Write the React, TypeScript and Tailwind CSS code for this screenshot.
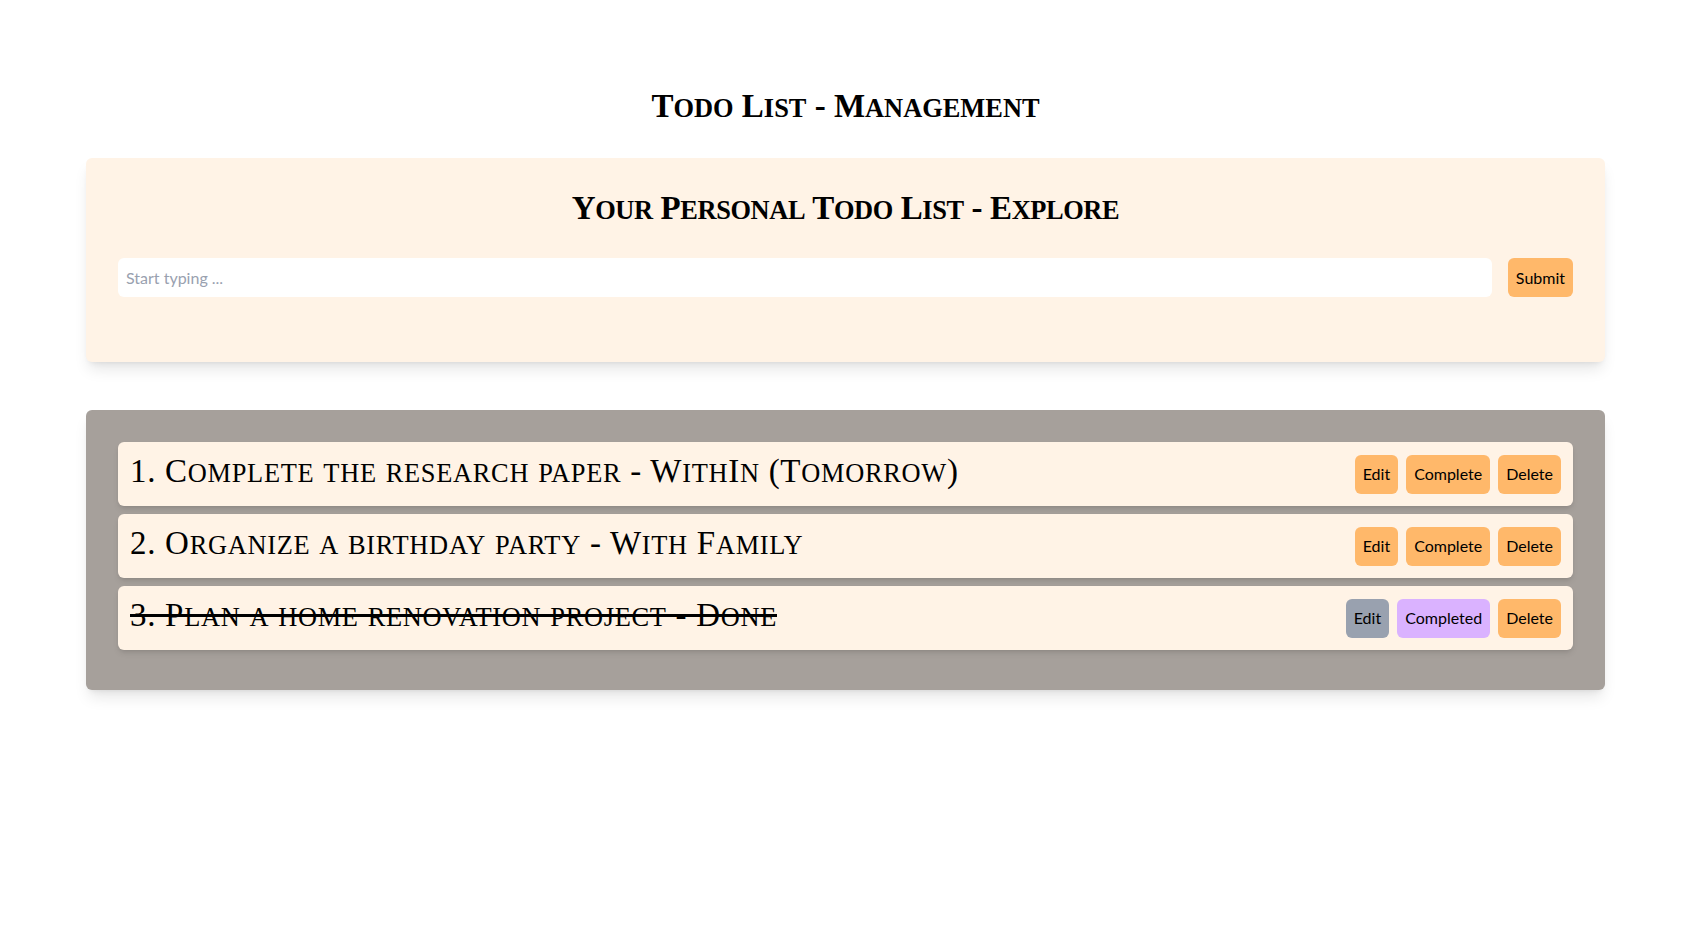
import { useState } from 'react';

type Todo = {
  id: number;
  text: string;
  done: boolean;
};

const initialTodos: Todo[] = [
  { id: 1, text: 'Complete the research paper - WithIn (Tomorrow)', done: false },
  { id: 2, text: 'Organize a birthday party - With Family', done: false },
  { id: 3, text: 'Plan a home renovation project - Done', done: true },
];

const serif = "font-['Liberation_Serif','Times_New_Roman',serif]";
const sans = "font-['Lato','Noto_Sans',sans-serif]";

// Cinzel-style caps: capitals full size, lowercase as small capitals
function Caps({ text }: { text: string }) {
  const parts = text.match(/[a-z]+|[^a-z]+/g) ?? [];
  return (
    <>
      {parts.map((p, i) =>
        /[a-z]/.test(p[0]) ? (
          <span key={i} className="uppercase text-[0.8em] leading-none">
            {p}
          </span>
        ) : (
          <span key={i}>{p}</span>
        )
      )}
    </>
  );
}

export default function App() {
  const [todos, setTodos] = useState<Todo[]>(initialTodos);
  const [value, setValue] = useState('');

  const addTodo = (e: React.FormEvent) => {
    e.preventDefault();
    if (!value.trim()) return;
    setTodos([...todos, { id: Date.now(), text: value, done: false }]);
    setValue('');
  };

  return (
    <div className="min-h-screen bg-white text-black">
      <div className="w-[1519px] ml-[86px] pt-[88px] pb-16">
        <h1 className={`${serif} text-[33px] leading-9 font-semibold text-center mb-[34px]`}>
          <Caps text="Todo List - Management" />
        </h1>

        <div className="bg-[#fff3e6] rounded-md shadow-lg p-8">
          <h2
            className={`${serif} text-[33px] leading-9 font-semibold tracking-[-0.4px] text-center mb-8`}
          >
            <Caps text="Your Personal Todo List - Explore" />
          </h2>
          <form onSubmit={addTodo} className="flex gap-4 mb-[33px]">
            <input
              value={value}
              onChange={(e) => setValue(e.target.value)}
              placeholder="Start typing ..."
              className={`${sans} flex-1 h-[39px] bg-white rounded-md px-2 text-base outline-none placeholder:text-gray-400`}
            />
            <button
              type="submit"
              className={`${sans} h-[39px] px-2 rounded-md bg-orange-300 text-base text-black`}
            >
              Submit
            </button>
          </form>
        </div>

        <div className="mt-12 bg-stone-400 rounded-md shadow-lg p-8">
          {todos.map((todo, i) => (
            <div
              key={todo.id}
              className="flex items-center justify-between bg-[#fff3e6] rounded-md shadow-md p-3 mb-2"
            >
              <p className={`${serif} text-[33px] leading-[34px] tracking-[0.7px] pb-[6px]`}>
                <span className="relative">
                  <Caps text={`${i + 1}. ${todo.text}`} />
                  {todo.done && (
                    <span className="absolute left-0 right-0 top-[17px] h-[3px] bg-black" />
                  )}
                </span>
              </p>
              <div className={`${sans} flex gap-2 text-base`}>
                <button
                  className={`h-[39px] px-2 rounded-md ${todo.done ? 'bg-gray-400' : 'bg-orange-300'}`}
                >
                  Edit
                </button>
                <button
                  onClick={() =>
                    setTodos(todos.map((t) => (t.id === todo.id ? { ...t, done: true } : t)))
                  }
                  className={`h-[39px] px-2 rounded-md ${todo.done ? 'bg-purple-300' : 'bg-orange-300'}`}
                >
                  {todo.done ? 'Completed' : 'Complete'}
                </button>
                <button
                  onClick={() => setTodos(todos.filter((t) => t.id !== todo.id))}
                  className="h-[39px] px-2 rounded-md bg-orange-300"
                >
                  Delete
                </button>
              </div>
            </div>
          ))}
        </div>
      </div>
    </div>
  );
}
